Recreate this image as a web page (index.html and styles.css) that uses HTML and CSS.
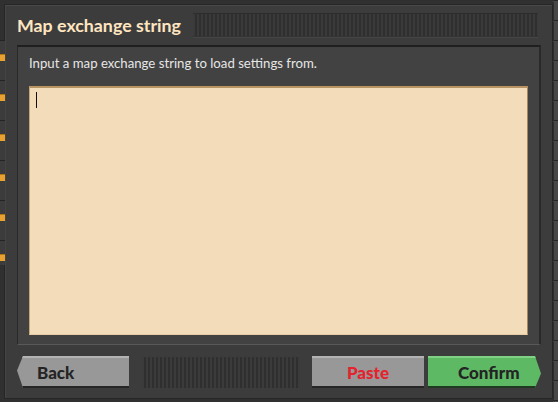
FILE: index.html
```html
<!DOCTYPE html>
<html lang="en">
<head>
    <meta charset="UTF-8">
    <meta name="viewport" content="width=device-width, initial-scale=1.0">
    <title>Map exchange string</title>
    <link rel="stylesheet" href="styles.css">
</head>
<body>
    <div class="frame">
        <!-- Title bar -->
        <div class="title-bar">
            <div class="title">Map exchange string</div>
            <div class="drag-handle"></div>
        </div>

        <!-- Content panel -->
        <div class="panel">
            <div class="hint">Input a map exchange string to load settings from.</div>
            <div class="textbox">
                <span class="caret"></span>
            </div>
        </div>

        <!-- Dialog buttons -->
        <div class="button-row">
            <button class="btn btn-back">Back</button>
            <div class="filler"></div>
            <button class="btn btn-paste">Paste</button>
            <button class="btn btn-confirm">Confirm</button>
        </div>
    </div>
</body>
</html>
```
FILE: styles.css
```css
body {
    margin: 0;
    width: 558px;
    height: 402px;
    overflow: hidden;
    position: relative;
    font-family: 'Lato', 'Open Sans', sans-serif;
    background-color: #303030;
    /* tiles of the window behind, peeking out on the right */
    background-image:
        linear-gradient(to bottom, #262626 0 1px, #484848 1px 2px, transparent 2px),
        linear-gradient(to right, #2c2c2c 0 1px, #474747 1px 5px);
    background-size: 5px 20px, 5px 100%;
    background-position: 553px 0, 553px 0;
    background-repeat: repeat-y, no-repeat;
}

/* orange slot markers on the left edge */
body::before {
    content: "";
    position: absolute;
    left: 0;
    top: 40px;
    width: 5px;
    height: 225px;
    background-image:
        linear-gradient(to bottom, #242424 0 1px, #3c3c3c 1px 14px, #b57614 14px 15px, #e9a12f 15px 21px, #3c3c3c 21px 40px);
    background-size: 5px 40px;
}

.frame {
    margin: 5px 0 0 5px;
    width: 547px;
    height: 393px;
    box-sizing: border-box;
    padding: 7px 11px 0 12px;
    background-color: #3d3c3d;
    border-top: 1px solid #4a494a;
    box-shadow: inset 1px 0 0 #454445, 0 0 0 1px #262626;
    display: flex;
    flex-direction: column;
}

.title-bar {
    display: flex;
    align-items: center;
    height: 24px;
}

.title {
    font-size: 17.8px;
    font-weight: bold;
    color: #ffe6c0;
    margin-top: -1px;
}

.drag-handle {
    flex: 1;
    height: 24px;
    margin: 0 3px 0 12px;
    background-color: #343334;
    background-image: repeating-linear-gradient(to right, #3b3a3b 0 2px, #302f30 2px 4px);
    background-size: 100% 22px;
    background-position: 0 1px;
    background-repeat: no-repeat;
    box-shadow: inset 0 1px 0 #2e2d2e, 0 1px 0 #474647;
}

.panel {
    margin-top: 8px;
    height: 300px;
    box-sizing: border-box;
    padding: 8px 11px 9px 11px;
    background-color: #424242;
    border-top: 2px solid #201f20;
    border-left: 1px solid #2a292a;
    border-right: 2px solid #2a292a;
    border-bottom: 1px solid #5a595a;
    display: flex;
    flex-direction: column;
}

.hint {
    font-size: 13.2px;
    color: #e6e6e6;
    height: 17px;
    line-height: 17px;
}

.textbox {
    margin-top: 14px;
    flex: 1;
    background-color: #f3dcba;
    border-top: 2px solid #b89462;
    border-left: 1px solid #c9a676;
    border-right: 1px solid #a98758;
    border-bottom: 1px solid #e7cda6;
    position: relative;
}

.caret {
    position: absolute;
    left: 6px;
    top: 4px;
    width: 1px;
    height: 16px;
    background-color: #111;
}

.button-row {
    margin-top: 11px;
    display: flex;
    align-items: center;
    height: 32px;
}

.btn {
    height: 32px;
    width: 112px;
    border: none;
    padding: 0;
    font-family: 'Lato', 'Open Sans', sans-serif;
    font-size: 17px;
    font-weight: 900;
    color: #242424;
    background-color: #989898;
    box-shadow: inset 0 2px 0 #b3b3b3, inset 0 -2px 0 #262626;
    cursor: pointer;
}

.btn-back {
    text-align: left;
    padding-left: 20px;
    clip-path: polygon(6px 0, 100% 0, 100% 100%, 6px 100%, 0 45%);
}

.btn-paste {
    color: #e4232e;
}

.btn-confirm {
    margin-left: 4px;
    width: 113px;
    background-color: #5eb964;
    box-shadow: inset 0 2px 0 #80d085, inset 0 -2px 0 #1f3a20;
    text-align: left;
    padding-left: 30px;
    clip-path: polygon(0 0, calc(100% - 6px) 0, 100% 55%, calc(100% - 6px) 100%, 0 100%);
}

.filler {
    width: 158px;
    height: 31px;
    margin: 0 12px 0 13px;
    background-color: #353435;
    background-image: repeating-linear-gradient(to right, #3c3b3c 0 2px, #302f30 2px 4px);
}
```
